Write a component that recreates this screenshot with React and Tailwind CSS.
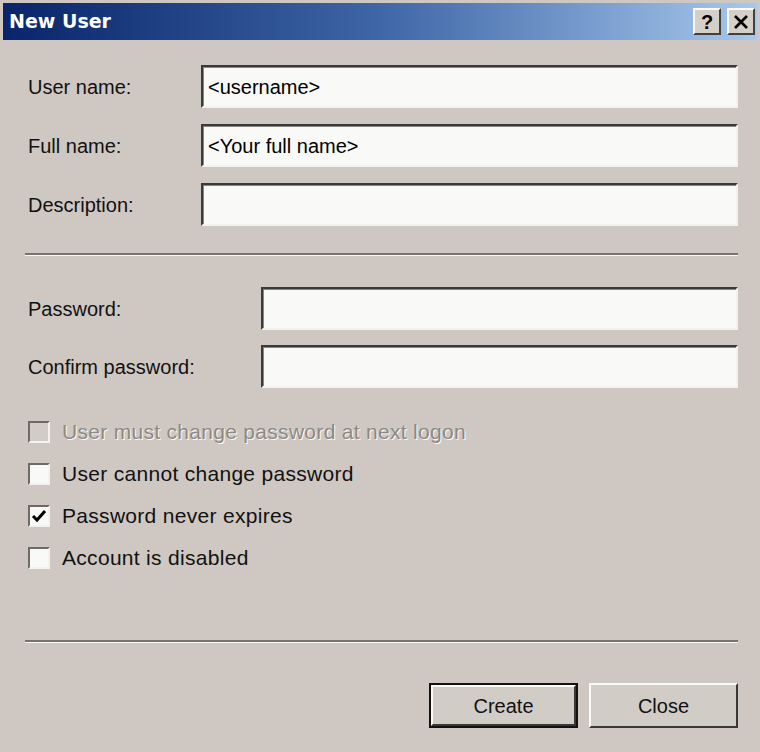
import React from 'react';

const font = { fontFamily: '"Liberation Sans", Arial, sans-serif' };

function Field({ value = '' }) {
  return (
    <div className="flex-1 h-[43px] border-t-2 border-l-2 border-t-[#3a3a3a] border-l-[#3a3a3a] border-b-2 border-r-2 border-b-[#f4f2ee] border-r-[#f4f2ee] shadow-[inset_1px_1px_0_#8a8680] bg-[#f9f9f8] flex items-center pl-[5px] text-[20px] text-black">
      {value}
    </div>
  );
}

function Row({ label, labelW, value, className = '' }) {
  return (
    <div className={`flex items-center ${className}`}>
      <div className={`${labelW} pl-[3px] text-[20px] text-[#111]`}>{label}</div>
      <Field value={value} />
    </div>
  );
}

function Separator({ className = '' }) {
  return (
    <div className={`h-[3px] border-t-2 border-t-[#77736e] border-b border-b-[#faf8f4] ${className}`} />
  );
}

function Check({ label, checked = false, disabled = false }) {
  return (
    <div className="h-[42px] flex items-center pl-[3px]">
      <div className={`w-[22px] h-[22px] border-t-2 border-l-2 border-t-[#6e6a66] border-l-[#6e6a66] border-b-2 border-r-2 border-b-[#f4f2ee] border-r-[#f4f2ee] flex items-center justify-center ${disabled ? 'bg-[#d2ccc6]' : 'bg-[#f9f9f8]'}`}>
        {checked && (
          <svg width="16" height="14" viewBox="0 0 16 14">
            <path d="M2 7 L6 11 L14 2" fill="none" stroke="#000" strokeWidth="3" />
          </svg>
        )}
      </div>
      <span
        className={`ml-[12px] text-[21px] tracking-[0.3px] ${disabled ? 'text-[#8c8884] [text-shadow:1px_1px_0_#fbfaf7]' : 'text-[#111]'}`}
      >
        {label}
      </span>
    </div>
  );
}

function Button({ children, isDefault = false }) {
  return (
    <div className={`w-[149px] h-[45px] ${isDefault ? 'border-2 border-[#111]' : ''}`}>
      <div className="w-full h-full border-t-2 border-l-2 border-t-[#fbfaf7] border-l-[#fbfaf7] border-b-2 border-r-2 border-b-[#3a3836] border-r-[#3a3836] bg-[#d2ccc6] flex items-center justify-center text-[20px] text-[#111]">
        {children}
      </div>
    </div>
  );
}

export default function App() {
  return (
    <div className="w-[760px] h-[752px] bg-[#cfc8c2] p-[3px] flex flex-col" style={font}>
      <div className="h-[37px] bg-gradient-to-r from-[#0a246a] via-[#3f66a6] to-[#a8c8ec] flex items-center justify-between pl-[6px] pr-[2px]">
        <span className="text-white font-bold text-[19px]" style={{ fontFamily: '"DejaVu Sans", Verdana, sans-serif' }}>New User</span>
        <div className="flex gap-[6px]">
          <div className="w-[28px] h-[27px] bg-[#d4d0c8] border-t-2 border-l-2 border-t-[#fbfaf7] border-l-[#fbfaf7] border-b-2 border-r-2 border-b-[#404040] border-r-[#404040] flex items-center justify-center text-[20px] font-bold text-black leading-none">
            ?
          </div>
          <div className="w-[28px] h-[27px] bg-[#d4d0c8] border-t-2 border-l-2 border-t-[#fbfaf7] border-l-[#fbfaf7] border-b-2 border-r-2 border-b-[#404040] border-r-[#404040] flex items-center justify-center">
            <svg width="16" height="14" viewBox="0 0 16 14">
              <path d="M2 1 L14 13 M14 1 L2 13" stroke="#000" strokeWidth="2.6" />
            </svg>
          </div>
        </div>
      </div>

      <div className="flex-1 flex flex-col pl-[22px] pr-[19px]">
        <div className="flex flex-col gap-[16px] mt-[25px]">
          <Row label="User name:" labelW="w-[176px]" value="<username>" />
          <Row label="Full name:" labelW="w-[176px]" value="<Your full name>" />
          <Row label="Description:" labelW="w-[176px]" />
        </div>

        <Separator className="mt-[27px]" />

        <div className="flex flex-col gap-[15px] mt-[31px]">
          <Row label="Password:" labelW="w-[236px]" />
          <Row label="Confirm password:" labelW="w-[236px]" />
        </div>

        <div className="flex flex-col mt-[23px]">
          <Check label="User must change password at next logon" disabled />
          <Check label="User cannot change password" />
          <Check label="Password never expires" checked />
          <Check label="Account is disabled" />
        </div>

        <Separator className="mt-[61px]" />

        <div className="flex justify-end gap-[11px] mt-[40px]">
          <Button isDefault>Create</Button>
          <Button>Close</Button>
        </div>
      </div>
    </div>
  );
}
